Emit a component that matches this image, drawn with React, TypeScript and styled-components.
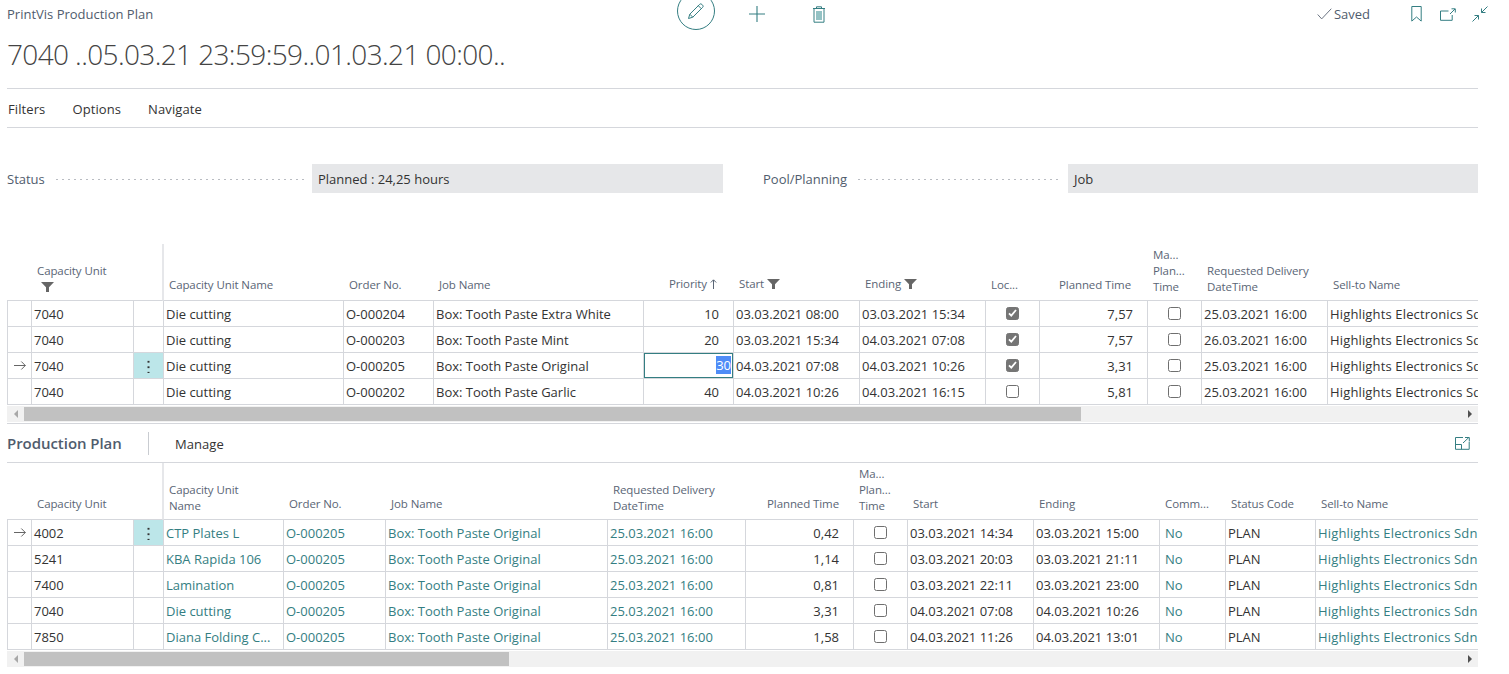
import React from "react";
import styled, { createGlobalStyle } from "styled-components";

const TEAL = "#347e82";
const LINE = "#d5d7dc";
const FONT = `"Open Sans", "Noto Sans", "Liberation Sans", sans-serif`;

const Global = createGlobalStyle`
  html, body { margin: 0; padding: 0; background: #fff; overflow: hidden; }
  body { font-family: ${FONT}; font-size: 13px; color: #333; }
`;

const Page = styled.div`
  width: 1471px;
  height: 674px;
  padding-left: 7px;
`;

const TopBar = styled.header`
  display: flex;
  align-items: flex-start;
  width: 1483px;
  height: 28px;
`;
const Crumb = styled.div`
  flex: 0 0 670px;
  font-size: 13px;
  line-height: 16px;
  margin-top: 6px;
  color: #505c6d;
`;
const Actions = styled.div`
  display: flex;
  align-items: center;
  height: 28px;
`;
const CircleBtn = styled.button`
  width: 38px;
  height: 38px;
  margin-top: -6px;
  border: 1px solid ${TEAL};
  border-radius: 50%;
  background: #fff;
  padding: 0;
  display: flex;
  align-items: center;
  justify-content: center;
`;
const IconBtn = styled.button<{ $gap: number }>`
  margin-left: ${(p) => p.$gap}px;
  width: 20px;
  height: 20px;
  padding: 0;
  border: 0;
  background: none;
  display: flex;
  align-items: center;
  justify-content: center;
`;
const Right = styled.div`
  display: flex;
  align-items: center;
  margin-left: auto;
  height: 28px;
`;
const SavedText = styled.span`
  font-size: 13px;
  color: #505c6d;
  margin-left: 2px;
  margin-right: 36px;
`;
const Title = styled.h1`
  margin: 7px 0 0;
  height: 53px;
  border-bottom: 1px solid ${LINE};
  font-size: 28px;
  font-weight: 300;
  letter-spacing: -0.62px;
  line-height: 38px;
  color: #444;
  white-space: nowrap;
`;
const MenuBar = styled.nav`
  display: flex;
  align-items: center;
  gap: 27px;
  box-sizing: border-box;
  height: 39px;
  padding: 1px 0 0 1px;
  border-bottom: 1px solid ${LINE};
`;
const MenuItem = styled.span`
  font-size: 13px;
  letter-spacing: 0.1px;
  color: #333;
`;
const Fields = styled.section`
  display: flex;
  margin-top: 36px;
  height: 29px;
`;
const Field = styled.div<{ $ml?: number; $labelW: number; $w: number }>`
  display: flex;
  align-items: center;
  margin-left: ${(p) => p.$ml ?? 0}px;
  width: ${(p) => p.$w}px;
  & > label {
    flex: 0 0 ${(p) => p.$labelW}px;
    display: flex;
    align-items: center;
    font-size: 13px;
    color: #505c6d;
    white-space: nowrap;
  }
  & > label::after {
    content: "";
    flex: 1;
    margin: 2px 7px 0 9px;
    height: 1px;
    background-image: radial-gradient(circle, #b9bcc2 0.6px, transparent 0.7px);
    background-size: 6px 1px;
  }
`;
const Value = styled.div`
  flex: 1;
  height: 29px;
  line-height: 30px;
  padding-left: 6px;
  background: #e6e7e9;
  font-size: 13px;
  color: #333;
`;

const Grid = styled.table<{ $mt?: number }>`
  width: 1471px;
  margin-top: ${(p) => p.$mt ?? 0}px;
  table-layout: fixed;
  border-collapse: separate;
  border-spacing: 0;
`;
const Col = styled.col<{ $w: number }>`
  width: ${(p) => p.$w}px;
`;
const Th = styled.th<{ $right?: boolean; $pr?: number; $sticky?: boolean; $pb: number }>`
  box-sizing: border-box;
  height: 57px;
  padding: 0 ${(p) => (p.$right ? p.$pr ?? 16 : 0)}px ${(p) => p.$pb}px 6px;
  vertical-align: bottom;
  text-align: ${(p) => (p.$right ? "right" : "left")};
  font-size: 11.5px;
  font-weight: 400;
  letter-spacing: -0.1px;
  line-height: 16px;
  color: #5a6575;
  white-space: pre-line;
  border-bottom: 1px solid ${LINE};
  ${(p) =>
    p.$sticky
      ? `border-right: 1px solid #e6e7ea;
         & + th { border-left: 1px solid #e6e7ea; padding-left: 5px; }`
      : ""}
`;
const Td = styled.td<{ $right?: boolean; $center?: boolean; $link?: boolean; $menu?: boolean; $flush?: boolean; $pl?: number }>`
  box-sizing: border-box;
  height: 26px;
  padding: ${(p) => (p.$flush ? 0 : 2)}px ${(p) => (p.$right ? 14 : 0)}px 0 ${(p) => p.$pl ?? 2}px;
  border-left: 1px solid ${LINE};
  border-bottom: 1px solid ${LINE};
  text-align: ${(p) => (p.$right ? "right" : p.$center ? "center" : "left")};
  color: ${(p) => (p.$link ? TEAL : "#333")};
  background: ${(p) => (p.$menu ? "#bce6e9" : "transparent")};
  font-size: 13px;
  line-height: ${(p) => (p.$flush ? 25 : 23)}px;
  white-space: nowrap;
  overflow: hidden;
`;
const Clip = styled.span<{ $cut?: boolean }>`
  display: block;
  overflow: hidden;
  letter-spacing: ${(p) => (p.$cut ? 0.15 : 0)}px;
`;
const EditBox = styled.div`
  box-sizing: border-box;
  height: 25px;
  line-height: 23px;
  border: 1px solid ${TEAL};
  text-align: right;
  padding-right: 1px;
`;
const Selected = styled.span`
  background: #4f8cf7;
  color: #fff;
  display: inline-block;
  line-height: 18px;
`;
const Box = styled.span<{ $on: boolean }>`
  display: inline-flex;
  vertical-align: middle;
  align-items: center;
  justify-content: center;
  box-sizing: border-box;
  width: 13px;
  height: 13px;
  margin-top: -3px;
  border-radius: 2.5px;
  border: 1px solid ${(p) => (p.$on ? "#757575" : "#6f6f6f")};
  background: ${(p) => (p.$on ? "#757575" : "#fff")};
`;
const Dots = styled.span`
  display: block;
  width: 3px;
  margin: 0 auto;
  height: 14px;
  background-image: radial-gradient(circle, #333 1px, transparent 1.2px);
  background-size: 3px 5.5px;
`;
const HeadIcon = styled.span`
  display: inline-block;
  vertical-align: -1px;
  margin-left: 3px;
`;
const HeadBlockIcon = styled.span`
  display: block;
  height: 12px;
  margin: 1px 0 -2px 4px;
`;

const Scroll = styled.div`
  display: flex;
  align-items: center;
  height: 16px;
  margin-top: 1px;
  background: #f1f1f1;
`;
const Arrow = styled.span<{ $dir: "l" | "r" }>`
  flex: 0 0 17px;
  display: flex;
  justify-content: center;
  &::before {
    content: "";
    border-style: solid;
    border-width: 4px 0 4px 0;
    border-color: transparent;
    ${(p) =>
      p.$dir === "l"
        ? "border-right: 4px solid #a8a8a8;"
        : "border-left: 4px solid #505050;"}
  }
`;
const Thumb = styled.span<{ $w: number }>`
  flex: 0 0 ${(p) => p.$w}px;
  height: 14px;
  background: #c1c1c1;
`;
const Fill = styled.span`
  flex: 1;
`;

const Section = styled.div`
  margin-top: 1px;
  border-top: 1px solid ${LINE};
  height: 38px;
  border-bottom: 1px solid ${LINE};
  display: flex;
  align-items: center;
`;
const SectionTitle = styled.h2`
  margin: 0;
  font-size: 15px;
  font-weight: 600;
  letter-spacing: -0.05px;
  color: #505c6d;
  width: 141px;
  height: 23px;
  line-height: 23px;
  border-right: 1px solid #c9ccd1;
`;
const SectionLink = styled.span`
  margin: 1px 0 0 26px;
  font-size: 13px;
  letter-spacing: 0.05px;
  color: #333;
`;
const Expand = styled.span`
  margin-left: auto;
  margin-right: 8px;
  display: flex;
`;

const Filter = () => (
  <svg width="13" height="10" viewBox="0 0 13 10">
    <path d="M0 0h13L8 5.2V10H5V5.2z" fill="#666" />
  </svg>
);
const Pencil = () => (
  <svg width="18" height="18" viewBox="0 0 18 18" fill="none" stroke={TEAL} strokeWidth="1">
    <path d="M1.5 16.5l1.3-4.3L12.6 2.4a1.6 1.6 0 0 1 2.3 0l.7.7a1.6 1.6 0 0 1 0 2.3L5.8 15.2z" />
    <path d="M2.8 12.2l3 3M11.3 3.7l3 3" />
  </svg>
);
const Plus = () => (
  <svg width="18" height="18" viewBox="0 0 18 18" fill="none" stroke={TEAL} strokeWidth="1.1">
    <path d="M9 1v16M1 9h16" />
  </svg>
);
const Trash = () => (
  <svg width="14" height="17" viewBox="0 0 14 17" fill="none" stroke={TEAL} strokeWidth="1">
    <path d="M1 2.5h12M4.5 2.5V.8h5v1.7" />
    <path d="M2 2.5v13.7h10V2.5" />
    <rect x="4" y="5" width="6" height="9" fill="#93c2c4" stroke="none" />
  </svg>
);
const Check = () => (
  <svg width="15" height="12" viewBox="0 0 15 12" fill="none" stroke="#6b7482" strokeWidth="1">
    <path d="M.7 6.5l4 4.4L14.3.7" />
  </svg>
);
const Bookmark = () => (
  <svg width="11" height="16" viewBox="0 0 11 16" fill="none" stroke={TEAL} strokeWidth="1">
    <path d="M.8.5h9.4v14.6L5.5 11 .8 15.1z" />
  </svg>
);
const PopOut = () => (
  <svg width="16" height="13" viewBox="0 0 16 13" fill="none" stroke={TEAL} strokeWidth="1">
    <path d="M8.5 3H.5v9.3h11.7V7" />
    <path d="M10 6l5-5M11.5.8h3.8v3.700" />
  </svg>
);
const Collapse = () => (
  <svg width="16" height="16" viewBox="0 0 16 16" fill="none" stroke={TEAL} strokeWidth="1">
    <path d="M15.5.5l-6 6M9.5 2.500v4h4" />
    <path d="M.5 15.5l6-6M2.500 9.500h4v4" />
  </svg>
);
const ExpandIcon = () => (
  <svg width="15" height="13" viewBox="0 0 15 13" fill="none" stroke={TEAL} strokeWidth="1">
    <path d="M8 .5H.5v11.800h13.700V5" />
    <path d="M.5 7.500h6v4.800M8 6l5.800-5.500M10 .5h4.300v4" />
  </svg>
);
const RowArrow = () => (
  <svg width="12" height="9" viewBox="0 0 12 9" fill="none" stroke="#555" strokeWidth="0.9">
    <path d="M0 4.500h11.300M7.300.5l4 4-4 4" />
  </svg>
);
const Tick = () => (
  <svg width="9" height="8" viewBox="0 0 9 8" fill="none" stroke="#fff" strokeWidth="1.8">
    <path d="M1 4.300l2.300 2.300L8 1" />
  </svg>
);
const SortUp = () => (
  <svg width="7" height="10" viewBox="0 0 7 10" fill="none" stroke="#5a6575" strokeWidth="1">
    <path d="M3.500 10V1M.8 3.500L3.500 .8l2.700 2.700" />
  </svg>
);

type Column = {
  label: string;
  w: number;
  right?: boolean;
  pr?: number;
  link?: boolean;
  pl?: number;
  cut?: boolean;
  icon?: "filter" | "sort";
};
type CellValue = string | boolean;

function DataGrid({
  columns,
  rows,
  unitFilter,
  activeRow,
  editCol,
  mt,
}: {
  columns: Column[];
  rows: { unit: string; cells: CellValue[] }[];
  unitFilter?: boolean;
  activeRow: number;
  editCol?: number;
  mt?: number;
}) {
  return (
    <Grid $mt={mt}>
      <colgroup>
        <Col $w={24} />
        <Col $w={102} />
        <Col $w={30} />
        {columns.map((c) => (
          <Col key={c.label} $w={c.w} />
        ))}
      </colgroup>
      <thead>
        <tr>
          <Th $pb={7} />
          <Th colSpan={2} $sticky $pb={unitFilter ? 10 : 7}>
            Capacity Unit
            {unitFilter && (
              <HeadBlockIcon>
                <Filter />
              </HeadBlockIcon>
            )}
          </Th>
          {columns.map((c) => (
            <Th key={c.label} $right={c.right} $pr={c.pr} $pb={c.label.includes("\n") ? 5 : 7}>
              {c.label}
              {c.icon === "filter" && (
                <HeadIcon>
                  <Filter />
                </HeadIcon>
              )}
              {c.icon === "sort" && (
                <HeadIcon>
                  <SortUp />
                </HeadIcon>
              )}
            </Th>
          ))}
        </tr>
      </thead>
      <tbody>
        {rows.map((r, i) => (
          <tr key={i}>
            <Td $center $flush $pl={0}>
              {i === activeRow && <RowArrow />}
            </Td>
            <Td>{r.unit}</Td>
            <Td $menu={i === activeRow} $flush $pl={0}>
              {i === activeRow && <Dots />}
            </Td>
            {r.cells.map((v, j) => {
              const c = columns[j];
              if (typeof v === "boolean") {
                return (
                  <Td key={j} $center $flush $pl={0}>
                    <Box $on={v}>{v && <Tick />}</Box>
                  </Td>
                );
              }
              if (i === activeRow && j === editCol) {
                return (
                  <Td key={j} $flush $pl={0}>
                    <EditBox>
                      <Selected>{v}</Selected>
                    </EditBox>
                  </Td>
                );
              }
              if (c.right) {
                return (
                  <Td key={j} $right>
                    {v}
                  </Td>
                );
              }
              return (
                <Td key={j} $link={c.link} $pl={c.pl}>
                  <Clip $cut={c.cut}>{v}</Clip>
                </Td>
              );
            })}
          </tr>
        ))}
      </tbody>
    </Grid>
  );
}

const topCols: Column[] = [
  { label: "Capacity Unit Name", w: 180 },
  { label: "Order No.", w: 90 },
  { label: "Job Name", w: 210 },
  { label: "Priority", w: 90, right: true, icon: "sort" },
  { label: "Start", w: 126, icon: "filter" },
  { label: "Ending", w: 126, icon: "filter" },
  { label: "Loc...", w: 54 },
  { label: "Planned Time", w: 108, right: true },
  { label: "Ma...\nPlan...\nTime", w: 54 },
  { label: "Requested Delivery\nDateTime", w: 126 },
  { label: "Sell-to Name", w: 151, cut: true },
];
const HL = "Highlights Electronics Sdn Bhd";
const topRows = [
  { unit: "7040", cells: ["Die cutting", "O-000204", "Box: Tooth Paste Extra White", "10", "03.03.2021 08:00", "03.03.2021 15:34", true, "7,57", false, "25.03.2021 16:00", HL] },
  { unit: "7040", cells: ["Die cutting", "O-000203", "Box: Tooth Paste Mint", "20", "03.03.2021 15:34", "04.03.2021 07:08", true, "7,57", false, "26.03.2021 16:00", HL] },
  { unit: "7040", cells: ["Die cutting", "O-000205", "Box: Tooth Paste Original", "30", "04.03.2021 07:08", "04.03.2021 10:26", true, "3,31", false, "25.03.2021 16:00", HL] },
  { unit: "7040", cells: ["Die cutting", "O-000202", "Box: Tooth Paste Garlic", "40", "04.03.2021 10:26", "04.03.2021 16:15", false, "5,81", false, "25.03.2021 16:00", HL] },
];
const botCols: Column[] = [
  { label: "Capacity Unit\nName", w: 120, link: true },
  { label: "Order No.", w: 102, link: true },
  { label: "Job Name", w: 222, link: true },
  { label: "Requested Delivery\nDateTime", w: 138, link: true },
  { label: "Planned Time", w: 108, right: true, pr: 14 },
  { label: "Ma...\nPlan...\nTime", w: 54 },
  { label: "Start", w: 126 },
  { label: "Ending", w: 126 },
  { label: "Comm...", w: 66, link: true, pl: 5 },
  { label: "Status Code", w: 90 },
  { label: "Sell-to Name", w: 163, link: true, cut: true },
];
const JOB = "Box: Tooth Paste Original";
const DUE = "25.03.2021 16:00";
const botRow = (unit: string, name: string, time: string, s: string, e: string) => ({
  unit,
  cells: [name, "O-000205", JOB, DUE, time, false, s, e, "No", "PLAN", HL] as CellValue[],
});
const botRows = [
  botRow("4002", "CTP Plates L", "0,42", "03.03.2021 14:34", "03.03.2021 15:00"),
  botRow("5241", "KBA Rapida 106", "1,14", "03.03.2021 20:03", "03.03.2021 21:11"),
  botRow("7400", "Lamination", "0,81", "03.03.2021 22:11", "03.03.2021 23:00"),
  botRow("7040", "Die cutting", "3,31", "04.03.2021 07:08", "04.03.2021 10:26"),
  botRow("7850", "Diana Folding C...", "1,58", "04.03.2021 11:26", "04.03.2021 13:01"),
];

export default function App() {
  return (
    <Page>
      <Global />
      <TopBar>
        <Crumb>PrintVis Production Plan</Crumb>
        <Actions>
          <CircleBtn aria-label="Edit">
            <Pencil />
          </CircleBtn>
          <IconBtn $gap={32} aria-label="New">
            <Plus />
          </IconBtn>
          <IconBtn $gap={42} aria-label="Delete">
            <Trash />
          </IconBtn>
        </Actions>
        <Right>
          <Check />
          <SavedText>Saved</SavedText>
          <IconBtn $gap={0} aria-label="Bookmark">
            <Bookmark />
          </IconBtn>
          <IconBtn $gap={12} aria-label="Open in new window">
            <PopOut />
          </IconBtn>
          <IconBtn $gap={12} aria-label="Collapse">
            <Collapse />
          </IconBtn>
        </Right>
      </TopBar>
      <Title>7040 ..05.03.21 23:59:59..01.03.21 00:00..</Title>
      <MenuBar>
        <MenuItem>Filters</MenuItem>
        <MenuItem>Options</MenuItem>
        <MenuItem>Navigate</MenuItem>
      </MenuBar>
      <Fields>
        <Field $w={716} $labelW={305}>
          <label>Status</label>
          <Value>Planned : 24,25 hours</Value>
        </Field>
        <Field $ml={40} $w={715} $labelW={305}>
          <label>Pool/Planning</label>
          <Value>Job</Value>
        </Field>
      </Fields>
      <DataGrid mt={51} columns={topCols} rows={topRows} unitFilter activeRow={2} editCol={3} />
      <Scroll>
        <Arrow $dir="l" />
        <Thumb $w={1057} />
        <Fill />
        <Arrow $dir="r" />
      </Scroll>
      <Section>
        <SectionTitle>Production Plan</SectionTitle>
        <SectionLink>Manage</SectionLink>
        <Expand>
          <ExpandIcon />
        </Expand>
      </Section>
      <DataGrid columns={botCols} rows={botRows} activeRow={0} />
      <Scroll>
        <Arrow $dir="l" />
        <Thumb $w={485} />
        <Fill />
        <Arrow $dir="r" />
      </Scroll>
    </Page>
  );
}
